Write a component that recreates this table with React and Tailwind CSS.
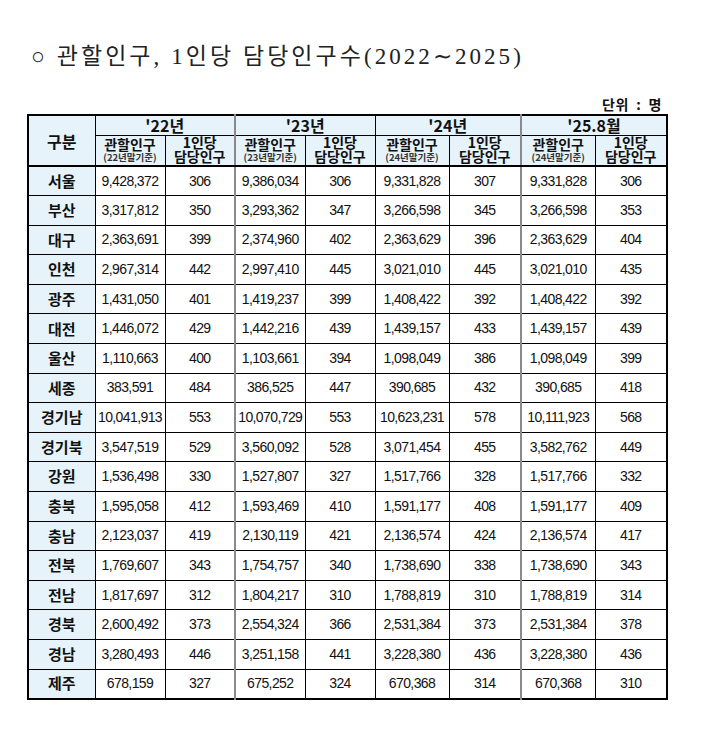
import React from 'react'

const KR = '"Noto Sans CJK KR", "Liberation Sans", sans-serif'
const NUM = '"Liberation Sans", "Noto Sans CJK KR", sans-serif'

const rows = [
  ['서울', '9,428,372', '306', '9,386,034', '306', '9,331,828', '307', '9,331,828', '306'],
  ['부산', '3,317,812', '350', '3,293,362', '347', '3,266,598', '345', '3,266,598', '353'],
  ['대구', '2,363,691', '399', '2,374,960', '402', '2,363,629', '396', '2,363,629', '404'],
  ['인천', '2,967,314', '442', '2,997,410', '445', '3,021,010', '445', '3,021,010', '435'],
  ['광주', '1,431,050', '401', '1,419,237', '399', '1,408,422', '392', '1,408,422', '392'],
  ['대전', '1,446,072', '429', '1,442,216', '439', '1,439,157', '433', '1,439,157', '439'],
  ['울산', '1,110,663', '400', '1,103,661', '394', '1,098,049', '386', '1,098,049', '399'],
  ['세종', '383,591', '484', '386,525', '447', '390,685', '432', '390,685', '418'],
  ['경기남', '10,041,913', '553', '10,070,729', '553', '10,623,231', '578', '10,111,923', '568'],
  ['경기북', '3,547,519', '529', '3,560,092', '528', '3,071,454', '455', '3,582,762', '449'],
  ['강원', '1,536,498', '330', '1,527,807', '327', '1,517,766', '328', '1,517,766', '332'],
  ['충북', '1,595,058', '412', '1,593,469', '410', '1,591,177', '408', '1,591,177', '409'],
  ['충남', '2,123,037', '419', '2,130,119', '421', '2,136,574', '424', '2,136,574', '417'],
  ['전북', '1,769,607', '343', '1,754,757', '340', '1,738,690', '338', '1,738,690', '343'],
  ['전남', '1,817,697', '312', '1,804,217', '310', '1,788,819', '310', '1,788,819', '314'],
  ['경북', '2,600,492', '373', '2,554,324', '366', '2,531,384', '373', '2,531,384', '378'],
  ['경남', '3,280,493', '446', '3,251,158', '441', '3,228,380', '436', '3,228,380', '436'],
  ['제주', '678,159', '327', '675,252', '324', '670,368', '314', '670,368', '310'],
]

const years = [
  { label: "'22년", base: '22년말기준' },
  { label: "'23년", base: '23년말기준' },
  { label: "'24년", base: '24년말기준' },
  { label: "'25.8월", base: '24년말기준' },
]

// left border style per data column (index 1..8)
const sepClass = [
  '',
  'border-l-black',
  'border-l-black',
  'border-l-2 border-l-[#8a8a8a]',
  'border-l-black',
  'border-l-black',
  'border-l-black',
  'border-l-2 border-l-[#8a8a8a]',
  'border-l-black',
]

export default function App() {
  return (
    <div className="w-[710px] h-[736px] bg-white text-[#111]">
      <h1
        className="pt-[43px] pl-[31px] text-[23px] leading-[28px] tracking-[3.05px] text-[#222] whitespace-nowrap"
        style={{ fontFamily: '"Liberation Serif", "Noto Sans CJK KR", serif' }}
      >
        ○ 관할인구, 1인당 담당인구수(2022∼2025)
      </h1>

      <div className="ml-[27px] w-[639px] mt-[24px]">
        <div
          className="text-right pr-[4px] text-[14px] leading-[18px] font-bold mb-[1px] tracking-[0.5px] whitespace-pre"
          style={{ fontFamily: KR }}
        >
          단위  :  명
        </div>

        <table
          className="table-fixed border-collapse border-2 border-black w-[639px]"
          style={{ fontFamily: KR }}
        >
          <colgroup>
            <col className="w-[67px]" />
            <col className="w-[70px]" />
            <col className="w-[70px]" />
            <col className="w-[70px]" />
            <col className="w-[70px]" />
            <col className="w-[74px]" />
            <col className="w-[72px]" />
            <col className="w-[74px]" />
            <col className="w-[72px]" />
          </colgroup>
          <thead className="bg-[#e6f3fb]">
            <tr className="h-[20px]">
              <th
                rowSpan={2}
                className="border border-black border-b-2 text-[16px] font-bold leading-none p-0"
              >
                구분
              </th>
              {years.map((y, i) => (
                <th
                  key={y.label}
                  colSpan={2}
                  className={`border border-black p-0 text-[16px] font-bold leading-[17px] ${
                    i === 1 || i === 3 ? 'border-l-2 border-l-[#8a8a8a]' : ''
                  }`}
                >
                  {y.label}
                </th>
              ))}
            </tr>
            <tr className="h-[31px]">
              {years.map((y, i) => (
                <React.Fragment key={y.label}>
                  <th
                    className={`border border-black border-b-2 p-0 font-bold ${
                      i === 1 || i === 3 ? 'border-l-2 border-l-[#8a8a8a]' : ''
                    }`}
                  >
                    <div className="text-[14px] leading-[15px]">관할인구</div>
                    <div className="text-[9.5px] leading-[11px] text-[#333]">({y.base})</div>
                  </th>
                  <th className="border border-black border-b-2 p-0 font-bold">
                    <div className="text-[14px] leading-[13px]">1인당</div>
                    <div className="text-[14px] leading-[15px]">담당인구</div>
                  </th>
                </React.Fragment>
              ))}
            </tr>
          </thead>
          <tbody>
            {rows.map(r => (
              <tr key={r[0]} className="h-[29.6px]">
                <td className="border border-black bg-[#e6f3fb] text-center text-[15px] font-bold p-0">
                  {r[0]}
                </td>
                {r.slice(1).map((v, j) => (
                  <td
                    key={j}
                    className={`border border-black p-0 text-center text-[14px] tracking-[-0.6px] ${sepClass[j + 1]}`}
                    style={{ fontFamily: NUM }}
                  >
                    {v}
                  </td>
                ))}
              </tr>
            ))}
          </tbody>
        </table>
      </div>
    </div>
  )
}
